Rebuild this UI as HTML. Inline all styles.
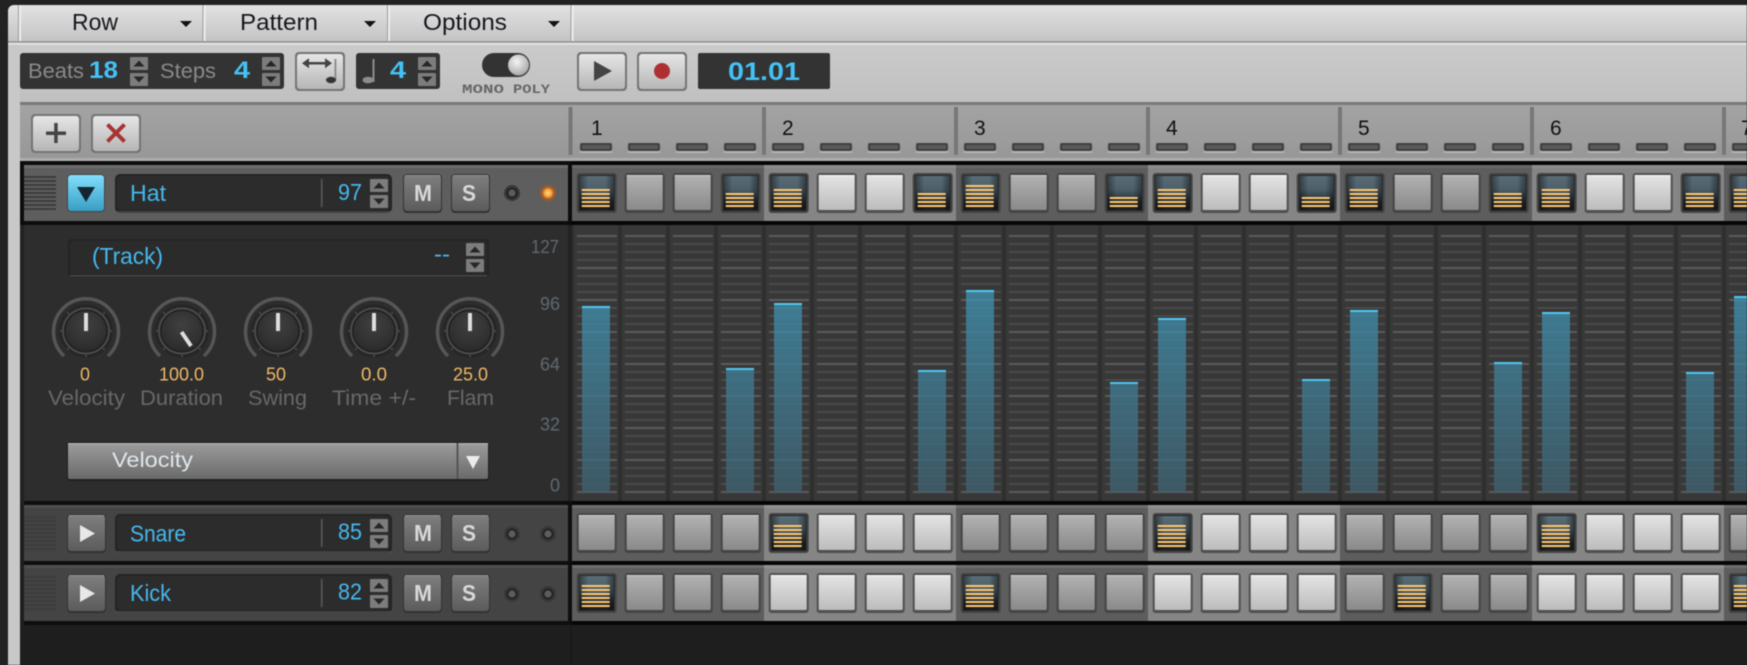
<!DOCTYPE html>
<html><head><meta charset="utf-8"><title>Step Sequencer</title>
<style>
html,body{margin:0;padding:0;background:#222;width:1747px;height:665px;overflow:hidden}
svg{display:block;filter:blur(.45px)}
text{font-family:"Liberation Sans",sans-serif}
.m{font-size:23px;fill:#16161e}
.b{font-size:24px;font-weight:bold;fill:#45c1f5}
.g{font-size:21px;fill:#8a8a8a}
.n{font-size:23px;fill:#45b8ee}
.v{font-size:18px;fill:#efb765}
.l{font-size:21px;fill:#686868}
.s{font-size:18px;fill:#5f6972}
.t{font-size:21px;fill:#111}
.ms{font-size:23px;font-weight:bold;fill:#d8d8d8}
.mp{font-family:"Liberation Mono",monospace;font-size:13px;font-weight:bold;fill:#666}
</style></head><body>
<svg width="1747" height="665" viewBox="0 0 1747 665" xmlns="http://www.w3.org/2000/svg">
<defs>
<linearGradient id="menu" x1="0" y1="0" x2="0" y2="1"><stop offset="0" stop-color="#e2e2e2"/><stop offset="1" stop-color="#c4c4c4"/></linearGradient>
<linearGradient id="pan" x1="0" y1="0" x2="0" y2="1"><stop offset="0" stop-color="#cbcbcb"/><stop offset="1" stop-color="#c0c0c0"/></linearGradient>
<linearGradient id="head" x1="0" y1="0" x2="0" y2="1"><stop offset="0" stop-color="#a4a4a4"/><stop offset="1" stop-color="#979797"/></linearGradient>
<linearGradient id="lb" x1="0" y1="0" x2="0" y2="1"><stop offset="0" stop-color="#e6e6e6"/><stop offset="1" stop-color="#b6b6b6"/></linearGradient>
<linearGradient id="dk" x1="0" y1="0" x2="0" y2="1"><stop offset="0" stop-color="#b2b2b2"/><stop offset="1" stop-color="#8a8a8a"/></linearGradient>
<linearGradient id="lt" x1="0" y1="0" x2="0" y2="1"><stop offset="0" stop-color="#e4e4e4"/><stop offset="1" stop-color="#bcbcbc"/></linearGradient>
<linearGradient id="on" x1="0" y1="0" x2="0" y2="1"><stop offset="0" stop-color="#5a6c76"/><stop offset=".4" stop-color="#4c5f6a"/><stop offset=".75" stop-color="#262d31"/><stop offset="1" stop-color="#1c1e20"/></linearGradient>
<linearGradient id="ons" x1="0" y1="0" x2="1" y2="0"><stop offset="0" stop-color="#000" stop-opacity=".4"/><stop offset=".25" stop-color="#000" stop-opacity="0"/><stop offset=".75" stop-color="#000" stop-opacity="0"/><stop offset="1" stop-color="#000" stop-opacity=".4"/></linearGradient>
<linearGradient id="gb" x1="0" y1="0" x2="0" y2="1"><stop offset="0" stop-color="#7e7e7e"/><stop offset="1" stop-color="#5c5c5c"/></linearGradient>
<linearGradient id="blu" x1="0" y1="0" x2="0" y2="1"><stop offset="0" stop-color="#82defc"/><stop offset="1" stop-color="#3a9ec4"/></linearGradient>
<linearGradient id="drop" x1="0" y1="0" x2="0" y2="1"><stop offset="0" stop-color="#9c9c9c"/><stop offset="1" stop-color="#6a6a6a"/></linearGradient>
<linearGradient id="bar" gradientUnits="userSpaceOnUse" x1="0" y1="290" x2="0" y2="492"><stop offset="0" stop-color="#4090ae"/><stop offset="1" stop-color="#3f606f"/></linearGradient>
<radialGradient id="kn" cx=".5" cy=".35" r=".7"><stop offset="0" stop-color="#404040"/><stop offset="1" stop-color="#2a2a2a"/></radialGradient>
<radialGradient id="kb" cx=".42" cy=".35" r=".7"><stop offset="0" stop-color="#f4f4f4"/><stop offset="1" stop-color="#a4a4a4"/></radialGradient>
<radialGradient id="led" cx=".5" cy=".5" r=".5"><stop offset="0" stop-color="#ffd78c"/><stop offset=".6" stop-color="#f6a53a"/><stop offset="1" stop-color="#a55a20"/></radialGradient>
<pattern id="grid" patternUnits="userSpaceOnUse" x="572" y="235" width="48" height="32">
<rect x="5" y="0" width="40" height="2" fill="#5c5c5c"/>
<rect x="5" y="8" width="40" height="2" fill="#4a4a4a"/>
<rect x="5" y="16" width="40" height="2" fill="#4a4a4a"/>
<rect x="5" y="24" width="40" height="2" fill="#4a4a4a"/>
</pattern>
<g id="bd"><rect width="40" height="40" rx="3" fill="#454545"/><rect x="2" y="2" width="36" height="35" rx="1" fill="url(#dk)"/><rect x="2" y="2" width="36" height="1" fill="#cdcdcd"/></g>
<g id="bl"><rect width="40" height="40" rx="3" fill="#505050"/><rect x="2" y="2" width="36" height="35" rx="1" fill="url(#lt)"/><rect x="2" y="2" width="36" height="1" fill="#f6f6f6"/></g>
<g id="bo"><rect width="40" height="40" rx="3" fill="#444"/><rect x="2" y="2" width="36" height="36" fill="#26292b"/><rect x="3" y="3" width="34" height="34" fill="url(#on)"/><rect x="3" y="3" width="34" height="34" fill="url(#ons)"/></g>
<g id="l3" fill="#ffc870"><rect x="5" y="32" width="28" height="2"/><rect x="5" y="28" width="28" height="2"/><rect x="5" y="24" width="28" height="2"/></g>
<g id="on3"><use href="#bo"/><use href="#l3"/></g>
<g id="on4"><use href="#on3"/><rect x="5" y="20" width="28" height="2" fill="#ffc870"/></g>
<g id="on5"><use href="#on4"/><rect x="5" y="16" width="28" height="2" fill="#ffc870"/></g>
<g id="on6"><use href="#on5"/><rect x="5" y="12" width="28" height="2" fill="#ffc870"/></g>
<g id="st"><rect width="18" height="13" rx="1" fill="#7c7c7c"/><rect y="16" width="18" height="13" rx="1" fill="#7c7c7c"/><path d="M3.500 9.500h11l-5.500-6z" fill="#262626"/><path d="M3.500 19.500h11l-5.500 6z" fill="#262626"/></g>
<g id="hd" fill="#3c3c3c"><rect y="0" width="32" height="2"/><rect y="4" width="32" height="2"/><rect y="8" width="32" height="2"/><rect y="12" width="32" height="2"/><rect y="16" width="32" height="2"/><rect y="20" width="32" height="2"/><rect y="24" width="32" height="2"/><rect y="28" width="32" height="2"/><rect y="32" width="32" height="2"/></g>
<g id="box"><rect x="-1" y="-1" width="277" height="39" rx="5" fill="#242424"/><rect x="0" y="36" width="275" height="2" fill="#5c5c5c" opacity=".55"/><rect x="1" y="1" width="273" height="34" rx="4" fill="#2c2c2c"/><rect x="205" y="4" width="1.500" height="28" fill="#5a5a5a"/></g>
<g id="rb"><rect x="-1" y="-1" width="39" height="39" rx="4" fill="#333"/><rect width="37" height="36" rx="3" fill="url(#gb)"/><rect x="1" y="0" width="35" height="1" fill="#929292"/></g>
<g id="ledoff"><circle r="8" fill="#383838"/><circle r="5.500" fill="#222"/><circle r="3.600" fill="#5c5c5c"/></g>
<g id="pb"><rect x="0" y="0" width="50" height="39" rx="4" fill="#757575"/><rect x="2" y="2" width="46" height="35" rx="3" fill="url(#lb)"/></g>
<g id="knob">
<path d="M-22 25A32.500 33 0 1 1 22 25" fill="none" stroke="#565656" stroke-width="3.500"/>
<ellipse rx="27" ry="26.500" fill="#262626"/>
<ellipse rx="23" ry="22.500" fill="#1f1f1f" stroke="#4a4a4a" stroke-width="2"/>
<ellipse rx="20.500" ry="20" fill="url(#kn)"/>
<g fill="#444"><circle cx="-25" cy="0" r="1.200"/><circle cx="25" cy="0" r="1.200"/><circle cx="-18" cy="-18" r="1.200"/><circle cx="18" cy="-18" r="1.200"/><circle cx="-18" cy="18" r="1.200"/><circle cx="18" cy="18" r="1.200"/><circle cy="25" r="1.200"/></g>
</g>
<pattern id="dash" patternUnits="userSpaceOnUse" x="572" y="140" width="48" height="14"><rect x="8" y="9" width="32" height="4" rx="1" fill="#b5b5b5"/><rect x="8" y="3" width="32" height="8" rx="2" fill="#3f3f3f"/><rect x="10" y="5" width="28" height="4" fill="#595959"/></pattern>
<pattern id="cols" patternUnits="userSpaceOnUse" x="572" y="225" width="48" height="32"><rect x="46" width="2" height="32" fill="#2f2f2f"/><rect width="2" height="32" fill="#2f2f2f"/></pattern>
</defs>

<rect width="1747" height="665" fill="#222"/>
<!-- light panel -->
<path d="M8 665V11a6 6 0 0 1 6-6H1747V665z" fill="#c8c8c8"/>
<rect x="20" y="161" width="1727" height="504" fill="#1e1e1e"/>
<rect x="20" y="44" width="1727" height="58" fill="url(#pan)"/>
<!-- menu bar -->
<path d="M8 41V11a6 6 0 0 1 6-6H1747V41z" fill="url(#menu)"/>
<rect x="8" y="41" width="1739" height="2" fill="#9c9c9c"/>
<rect x="8" y="43" width="1739" height="1.500" fill="#ececec"/>
<g><rect x="18" y="5" width="1" height="36" fill="#9c9c9c"/><rect x="19" y="5" width="2" height="36" fill="#efefef"/>
<rect x="202.500" y="5" width="1" height="36" fill="#9c9c9c"/><rect x="203.500" y="5" width="2" height="36" fill="#efefef"/>
<rect x="387" y="5" width="1" height="36" fill="#9c9c9c"/><rect x="388" y="5" width="2" height="36" fill="#efefef"/>
<rect x="570.500" y="5" width="1" height="36" fill="#9c9c9c"/><rect x="571.500" y="5" width="2" height="36" fill="#efefef"/></g>
<text class="m" x="72" y="30" textLength="46" lengthAdjust="spacingAndGlyphs">Row</text>
<text class="m" x="240" y="30" textLength="78" lengthAdjust="spacingAndGlyphs">Pattern</text>
<text class="m" x="423" y="30" textLength="84" lengthAdjust="spacingAndGlyphs">Options</text>
<path d="M180 21h12l-6 6zM364 21h12l-6 6zM548 21h12l-6 6z" fill="#111"/>

<!-- toolbar -->
<rect x="20" y="53" width="264" height="36" rx="3" fill="#333"/>
<text class="g" x="28" y="78" textLength="56" lengthAdjust="spacingAndGlyphs">Beats</text>
<text class="b" x="89" y="78" textLength="29" lengthAdjust="spacingAndGlyphs">18</text>
<use href="#st" x="130" y="57"/>
<text class="g" x="160" y="78" textLength="56" lengthAdjust="spacingAndGlyphs">Steps</text>
<text class="b" x="234" y="78" textLength="16" lengthAdjust="spacingAndGlyphs">4</text>
<use href="#st" x="262" y="57"/>
<use href="#pb" x="295" y="52"/>
<g fill="#444"><rect x="305" y="62" width="24" height="2.500"/><path d="M302 63.200l7-5v10zM332 63.200l-7-5v10z"/><rect x="334.500" y="59" width="1.800" height="22" fill="#888"/><ellipse cx="331" cy="80" rx="5" ry="3.200" fill="#333"/></g>
<rect x="356" y="53" width="84" height="36" rx="3" fill="#333"/>
<rect x="372.500" y="59" width="2" height="23" fill="#8c8c8c"/><ellipse cx="368" cy="80" rx="5.500" ry="3.300" fill="#8c8c8c"/>
<text class="b" x="390" y="78" textLength="16" lengthAdjust="spacingAndGlyphs">4</text>
<use href="#st" x="418" y="57"/>
<rect x="482" y="53" width="48" height="24" rx="12" fill="#333"/>
<circle cx="518.500" cy="65" r="10.500" fill="url(#kb)"/>
<text class="mp" x="462" y="93" textLength="42" lengthAdjust="spacingAndGlyphs">MONO</text>
<text class="mp" x="513" y="93" textLength="37" lengthAdjust="spacingAndGlyphs">POLY</text>
<use href="#pb" x="577" y="52"/>
<path d="M594 61v20l18-10z" fill="#444"/>
<use href="#pb" x="637" y="52"/>
<circle cx="662" cy="71" r="8" fill="#ad3033"/>
<rect x="698" y="53" width="132" height="36" rx="2" fill="#333"/>
<text x="728" y="80" font-size="25" font-weight="bold" fill="#45c1f5" textLength="72" lengthAdjust="spacingAndGlyphs">01.01</text>

<!-- header -->
<rect x="20" y="102" width="1727" height="59" fill="url(#head)"/>
<rect x="20" y="102" width="1727" height="3" fill="#797979"/>
<rect x="20" y="158" width="1727" height="3" fill="#adadad"/>
<use href="#pb" x="31" y="114"/>
<rect x="46" y="131.500" width="20" height="3.500" fill="#444"/><rect x="54.200" y="123" width="3.500" height="20" fill="#444"/>
<use href="#pb" x="91" y="114"/>
<path d="M107.500 124.500L124.500 141.500M124.500 124.500L107.500 141.500" stroke="#a83434" stroke-width="4" fill="none"/>
<g fill="#777"><rect x="568.500" y="107" width="4" height="48"/><rect x="762" y="107" width="4" height="48"/><rect x="954" y="107" width="4" height="48"/><rect x="1146" y="107" width="4" height="48"/><rect x="1338" y="107" width="4" height="48"/><rect x="1530" y="107" width="4" height="48"/><rect x="1722" y="107" width="4" height="48"/></g>
<text class="t" x="591" y="135">1</text><text class="t" x="782" y="135">2</text><text class="t" x="974" y="135">3</text><text class="t" x="1166" y="135">4</text><text class="t" x="1358" y="135">5</text><text class="t" x="1550" y="135">6</text><text class="t" x="1741" y="135">7</text>
<rect x="572" y="140" width="1175" height="14" fill="url(#dash)"/>

<!-- left rows -->
<rect x="20" y="161" width="552" height="344" fill="#222"/>
<rect x="20" y="161" width="552" height="4" fill="#0c0c0c"/>
<rect x="568" y="161" width="4" height="64" fill="#0c0c0c"/>
<rect x="20" y="165" width="4" height="60" fill="#0c0c0c"/>
<rect x="24" y="165" width="544" height="56" fill="#5e5e5e"/>
<rect x="24" y="165" width="544" height="3" fill="#6c6c6c"/>
<rect x="24" y="221" width="544" height="4" fill="#0c0c0c"/>
<rect x="24" y="225" width="544" height="276" fill="#2d2d2d"/>
<rect x="24" y="501" width="544" height="4" fill="#0e0e0e"/>
<rect x="24" y="505" width="544" height="56" fill="#444"/><rect x="24" y="505" width="544" height="3" fill="#4f4f4f"/>
<rect x="24" y="561" width="544" height="4" fill="#0e0e0e"/>
<rect x="24" y="565" width="544" height="56" fill="#444"/><rect x="24" y="565" width="544" height="3" fill="#4f4f4f"/>
<rect x="24" y="621" width="544" height="4" fill="#0e0e0e"/>
<rect x="20" y="505" width="4" height="160" fill="#1e1e1e"/>
<rect x="20" y="625" width="552" height="40" fill="#1e1e1e"/>
<rect x="570" y="625" width="2" height="40" fill="#1a1a1a"/>

<!-- Hat -->
<use href="#hd" x="24" y="176"/>
<rect x="67" y="174" width="38" height="38" rx="4" fill="#444"/><rect x="68" y="175" width="36" height="36" rx="3" fill="url(#blu)"/>
<path d="M77 187h18l-9 15z" fill="#122630"/>
<use href="#box" x="116" y="175"/>
<text class="n" x="130" y="201" textLength="36" lengthAdjust="spacingAndGlyphs">Hat</text>
<text class="n" x="338" y="200" font-size="22" textLength="24" lengthAdjust="spacingAndGlyphs">97</text>
<use href="#st" x="370" y="179"/>
<use href="#rb" x="404" y="175"/><text class="ms" x="414" y="201" textLength="18" lengthAdjust="spacingAndGlyphs">M</text>
<use href="#rb" x="452" y="175"/><text class="ms" x="462" y="201" textLength="14" lengthAdjust="spacingAndGlyphs">S</text>
<use href="#ledoff" x="512" y="193"/>
<circle cx="548" cy="193" r="8" fill="#9a5a30"/><circle cx="548" cy="193" r="6" fill="url(#led)"/>

<!-- detail -->
<rect x="68" y="239" width="421" height="38" rx="4" fill="#242424"/>
<rect x="70" y="275" width="417" height="1.500" fill="#484848"/>
<rect x="70" y="241" width="417" height="33" rx="3" fill="#2b2b2b"/>
<text class="n" x="92" y="264" font-size="21" textLength="71" lengthAdjust="spacingAndGlyphs">(Track)</text>
<text class="n" x="434" y="262" font-size="20" textLength="16" lengthAdjust="spacingAndGlyphs">--</text>
<use href="#st" x="466" y="243"/>
<use href="#knob" x="86" y="331"/><rect x="84" y="313" width="4" height="18" fill="#ddd"/>
<use href="#knob" x="182" y="331"/><path d="M181.500 332L191 346" stroke="#ddd" stroke-width="4"/>
<use href="#knob" x="278" y="331"/><rect x="276" y="313" width="4" height="18" fill="#ddd"/>
<use href="#knob" x="374" y="331"/><rect x="372" y="313" width="4" height="18" fill="#ddd"/>
<use href="#knob" x="470" y="331"/><rect x="468" y="313" width="4" height="18" fill="#ddd"/>
<text class="v" x="80" y="380.500" textLength="10" lengthAdjust="spacingAndGlyphs">0</text>
<text class="v" x="159" y="380.500" textLength="45" lengthAdjust="spacingAndGlyphs">100.0</text>
<text class="v" x="266" y="380.500" textLength="20" lengthAdjust="spacingAndGlyphs">50</text>
<text class="v" x="361" y="380.500" textLength="26" lengthAdjust="spacingAndGlyphs">0.0</text>
<text class="v" x="453" y="380.500" textLength="35" lengthAdjust="spacingAndGlyphs">25.0</text>
<text class="l" x="48" y="405" textLength="77" lengthAdjust="spacingAndGlyphs">Velocity</text>
<text class="l" x="140" y="405" textLength="83" lengthAdjust="spacingAndGlyphs">Duration</text>
<text class="l" x="248" y="405" textLength="59" lengthAdjust="spacingAndGlyphs">Swing</text>
<text class="l" x="332" y="405" textLength="84" lengthAdjust="spacingAndGlyphs">Time +/-</text>
<text class="l" x="447" y="405" textLength="47" lengthAdjust="spacingAndGlyphs">Flam</text>
<rect x="67" y="442" width="422" height="39" rx="3" fill="#222"/>
<rect x="68" y="443" width="420" height="36" rx="2" fill="url(#drop)"/>
<rect x="68" y="443" width="420" height="1.500" fill="#adadad"/>
<rect x="456.500" y="443" width="2" height="36" fill="#555"/>
<path d="M466 456h14l-7 13z" fill="#ececec"/>
<text x="112" y="467" font-size="21" fill="#dfe6ea" textLength="81" lengthAdjust="spacingAndGlyphs">Velocity</text>
<text class="s" x="531" y="253" textLength="28" lengthAdjust="spacingAndGlyphs">127</text>
<text class="s" x="540" y="310" textLength="20" lengthAdjust="spacingAndGlyphs">96</text>
<text class="s" x="540" y="370.700" textLength="20" lengthAdjust="spacingAndGlyphs">64</text>
<text class="s" x="540" y="430.700" textLength="20" lengthAdjust="spacingAndGlyphs">32</text>
<text class="s" x="550" y="491.700" textLength="10" lengthAdjust="spacingAndGlyphs">0</text>

<!-- Snare -->
<use href="#hd" x="24" y="516"/>
<use href="#rb" x="68" y="515"/><path d="M80 525v17l15-8.500z" fill="#e8e8e8"/>
<use href="#box" x="116" y="515"/>
<text class="n" x="130" y="541.500" textLength="56" lengthAdjust="spacingAndGlyphs">Snare</text>
<text class="n" x="338" y="539.500" font-size="22" textLength="24" lengthAdjust="spacingAndGlyphs">85</text>
<use href="#st" x="370" y="519"/>
<use href="#rb" x="404" y="515"/><text class="ms" x="414" y="541" textLength="18" lengthAdjust="spacingAndGlyphs">M</text>
<use href="#rb" x="452" y="515"/><text class="ms" x="462" y="541" textLength="14" lengthAdjust="spacingAndGlyphs">S</text>
<use href="#ledoff" x="512" y="534"/><use href="#ledoff" x="548" y="534"/>

<!-- Kick -->
<use href="#hd" x="24" y="576"/>
<use href="#rb" x="68" y="575"/><path d="M80 585v17l15-8.500z" fill="#e8e8e8"/>
<use href="#box" x="116" y="575"/>
<text class="n" x="130" y="601" textLength="41" lengthAdjust="spacingAndGlyphs">Kick</text>
<text class="n" x="338" y="599.500" font-size="22" textLength="24" lengthAdjust="spacingAndGlyphs">82</text>
<use href="#st" x="370" y="579"/>
<use href="#rb" x="404" y="575"/><text class="ms" x="414" y="601" textLength="18" lengthAdjust="spacingAndGlyphs">M</text>
<use href="#rb" x="452" y="575"/><text class="ms" x="462" y="601" textLength="14" lengthAdjust="spacingAndGlyphs">S</text>
<use href="#ledoff" x="512" y="594"/><use href="#ledoff" x="548" y="594"/>

<!-- right side bands -->
<rect x="572" y="161" width="1175" height="4" fill="#060606"/>
<rect x="572" y="221" width="1175" height="4" fill="#060606"/>
<rect x="572" y="501" width="1175" height="4" fill="#060606"/>
<rect x="572" y="561" width="1175" height="4" fill="#060606"/>
<rect x="572" y="621" width="1175" height="4" fill="#060606"/>
<rect x="568" y="501" width="4" height="124" fill="#0e0e0e"/>

<!-- grid -->
<rect x="572" y="225" width="1175" height="276" fill="#383838"/>
<rect x="572" y="225" width="1175" height="276" fill="url(#cols)"/>
<rect x="572" y="235" width="1175" height="258" fill="url(#grid)"/>
<g fill="url(#bar)" opacity=".8">
<rect x="582" y="307" width="28" height="185.500"/><rect x="726" y="369" width="28" height="123.500"/><rect x="774" y="304" width="28" height="188.500"/><rect x="918" y="371" width="28" height="121.500"/><rect x="966" y="291" width="28" height="201.500"/><rect x="1110" y="383" width="28" height="109.500"/><rect x="1158" y="319" width="28" height="173.500"/><rect x="1302" y="380" width="28" height="112.500"/><rect x="1350" y="311" width="28" height="181.500"/><rect x="1494" y="363" width="28" height="129.500"/><rect x="1542" y="313" width="28" height="179.500"/><rect x="1686" y="373" width="28" height="119.500"/><rect x="1734" y="297" width="28" height="195.500"/>
</g>
<g fill="#4fc6f0">
<rect x="582" y="306" width="28" height="2"/><rect x="726" y="368" width="28" height="2"/><rect x="774" y="303" width="28" height="2"/><rect x="918" y="370" width="28" height="2"/><rect x="966" y="290" width="28" height="2"/><rect x="1110" y="382" width="28" height="2"/><rect x="1158" y="318" width="28" height="2"/><rect x="1302" y="379" width="28" height="2"/><rect x="1350" y="310" width="28" height="2"/><rect x="1494" y="362" width="28" height="2"/><rect x="1542" y="312" width="28" height="2"/><rect x="1686" y="372" width="28" height="2"/><rect x="1734" y="296" width="28" height="2"/>
</g>

<!-- step row backgrounds -->
<g>
<g fill="#5d5d5d"><rect x="572" y="165" width="192" height="56"/><rect x="956" y="165" width="192" height="56"/><rect x="1340" y="165" width="192" height="56"/><rect x="1724" y="165" width="23" height="56"/>
<rect x="572" y="505" width="192" height="56"/><rect x="956" y="505" width="192" height="56"/><rect x="1340" y="505" width="192" height="56"/><rect x="1724" y="505" width="23" height="56"/>
<rect x="572" y="565" width="192" height="56"/><rect x="956" y="565" width="192" height="56"/><rect x="1340" y="565" width="192" height="56"/><rect x="1724" y="565" width="23" height="56"/></g>
<g fill="#858585"><rect x="764" y="165" width="192" height="56"/><rect x="1148" y="165" width="192" height="56"/><rect x="1532" y="165" width="192" height="56"/>
<rect x="764" y="505" width="192" height="56"/><rect x="1148" y="505" width="192" height="56"/><rect x="1532" y="505" width="192" height="56"/>
<rect x="764" y="565" width="192" height="56"/><rect x="1148" y="565" width="192" height="56"/><rect x="1532" y="565" width="192" height="56"/></g>
<rect x="572" y="165" width="1175" height="3" fill="#fff" opacity=".07"/>
<rect x="572" y="505" width="1175" height="3" fill="#fff" opacity=".1"/>
<rect x="572" y="565" width="1175" height="3" fill="#fff" opacity=".1"/>
</g>

<!-- Hat steps -->
<g transform="translate(-.3 173)">
<use href="#on5" x="577"/><use href="#bd" x="625"/><use href="#bd" x="673"/><use href="#on4" x="721"/>
<use href="#on5" x="769"/><use href="#bl" x="817"/><use href="#bl" x="865"/><use href="#on4" x="913"/>
<use href="#on6" x="961"/><use href="#bd" x="1009"/><use href="#bd" x="1057"/><use href="#on3" x="1105"/>
<use href="#on5" x="1153"/><use href="#bl" x="1201"/><use href="#bl" x="1249"/><use href="#on3" x="1297"/>
<use href="#on5" x="1345"/><use href="#bd" x="1393"/><use href="#bd" x="1441"/><use href="#on4" x="1489"/>
<use href="#on5" x="1537"/><use href="#bl" x="1585"/><use href="#bl" x="1633"/><use href="#on4" x="1681"/>
<use href="#on5" x="1729"/>
</g>
<!-- Snare steps -->
<g transform="translate(-.3 513)">
<use href="#bd" x="577"/><use href="#bd" x="625"/><use href="#bd" x="673"/><use href="#bd" x="721"/>
<use href="#on6" x="769"/><use href="#bl" x="817"/><use href="#bl" x="865"/><use href="#bl" x="913"/>
<use href="#bd" x="961"/><use href="#bd" x="1009"/><use href="#bd" x="1057"/><use href="#bd" x="1105"/>
<use href="#on6" x="1153"/><use href="#bl" x="1201"/><use href="#bl" x="1249"/><use href="#bl" x="1297"/>
<use href="#bd" x="1345"/><use href="#bd" x="1393"/><use href="#bd" x="1441"/><use href="#bd" x="1489"/>
<use href="#on6" x="1537"/><use href="#bl" x="1585"/><use href="#bl" x="1633"/><use href="#bl" x="1681"/>
<use href="#bd" x="1729"/>
</g>
<!-- Kick steps -->
<g transform="translate(-.3 573)">
<use href="#on6" x="577"/><use href="#bd" x="625"/><use href="#bd" x="673"/><use href="#bd" x="721"/>
<use href="#bl" x="769"/><use href="#bl" x="817"/><use href="#bl" x="865"/><use href="#bl" x="913"/>
<use href="#on6" x="961"/><use href="#bd" x="1009"/><use href="#bd" x="1057"/><use href="#bd" x="1105"/>
<use href="#bl" x="1153"/><use href="#bl" x="1201"/><use href="#bl" x="1249"/><use href="#bl" x="1297"/>
<use href="#bd" x="1345"/><use href="#on6" x="1393"/><use href="#bd" x="1441"/><use href="#bd" x="1489"/>
<use href="#bl" x="1537"/><use href="#bl" x="1585"/><use href="#bl" x="1633"/><use href="#bl" x="1681"/>
<use href="#on6" x="1729"/>
</g>
</svg>
</body></html>
